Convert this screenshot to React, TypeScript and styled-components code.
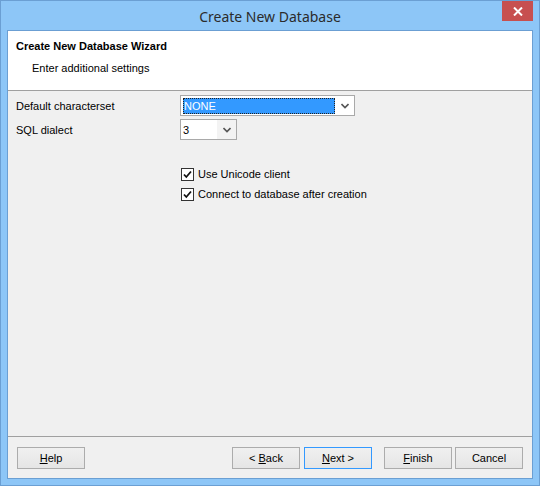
import React from 'react'
import styled, { createGlobalStyle, css } from 'styled-components'

const GlobalStyle = createGlobalStyle`
  html, body {
    margin: 0;
    padding: 0;
    background: #ffffff;
  }
  body {
    font-family: 'Liberation Sans', Arial, sans-serif;
    font-size: 11px;
    color: #000;
  }
`

const Window = styled('div')`
  width: 540px;
  height: 486px;
  box-sizing: border-box;
  border: 1px solid #6b9fd3;
  background: #8dc6f7;
  display: flex;
  flex-direction: column;
  padding: 0 6px 6px 6px;
`

const TitleBar = styled('div')`
  height: 29px;
  flex: none;
  display: flex;
  align-items: center;
  justify-content: center;
  position: relative;
`

const TitleText = styled('span')`
  font-family: 'Noto Sans', 'Open Sans', sans-serif;
  font-size: 14px;
  color: #2b2b2b;
  margin-top: 1px;
`

const CloseButton = styled('div')`
  position: absolute;
  top: 0;
  right: 0;
  width: 31px;
  height: 20px;
  background: #c75050;
  display: flex;
  align-items: center;
  justify-content: center;
`

const Client = styled('div')`
  flex: 1;
  border: 1px solid #6b9fd3;
  background: #f0f0f0;
  display: flex;
  flex-direction: column;
  min-height: 0;
`

const Header = styled('div')`
  height: 60px;
  flex: none;
  background: #ffffff;
  border-bottom: 1px solid #a0a0a0;
  padding: 8px 0 0 8px;
  box-sizing: border-box;
`

const HeaderTitle = styled('div')`
  font-weight: bold;
  line-height: 14px;
`

const HeaderSub = styled('div')`
  margin: 8px 0 0 16px;
  line-height: 14px;
`

const Body = styled('div')`
  flex: 1;
  padding: 4px 0 0 8px;
  display: flex;
  flex-direction: column;
`

const FieldRow = styled('div')`
  display: grid;
  grid-template-columns: 164px auto;
  align-items: center;
  margin-bottom: 3px;
`

const Label = styled('span')`
  line-height: 14px;
`

const Combo = styled('div')<{ $width: number }>`
  width: ${({ $width }) => $width}px;
  height: 21px;
  box-sizing: border-box;
  border: 1px solid #a9a9a9;
  background: #ffffff;
  display: flex;
  align-items: stretch;
`

const ComboValue = styled('div')<{ $selected?: boolean }>`
  flex: 1;
  display: flex;
  align-items: center;
  padding-left: 2px;
  ${({ $selected }) =>
    $selected &&
    css`
      margin: 2px 0 1px 2px;
      padding-left: 1px;
      background: #3399ff;
      color: #ffffff;
      outline: 1px dotted #222;
      outline-offset: -1px;
    `}
`

const ComboArrow = styled('div')<{ $shaded?: boolean }>`
  width: 19px;
  flex: none;
  display: flex;
  align-items: center;
  justify-content: center;
  ${({ $shaded }) =>
    $shaded &&
    css`
      background: #f3f3f3;
    `}
`

const Checks = styled('div')`
  margin: 24px 0 0 165px;
  display: flex;
  flex-direction: column;
  gap: 6px;
`

const CheckRow = styled('label')`
  display: flex;
  align-items: center;
  gap: 4px;
  line-height: 14px;
`

const Box = styled('span')`
  width: 13px;
  height: 13px;
  box-sizing: border-box;
  border: 1px solid #333;
  background: #fff;
  display: flex;
  align-items: center;
  justify-content: center;
`

const Footer = styled('div')`
  height: 42px;
  flex: none;
  border-top: 1px solid #a0a0a0;
  box-sizing: border-box;
  display: flex;
  align-items: flex-start;
  padding: 10px 9px 0 9px;
`

const Button = styled('button')<{ $default?: boolean; $gap?: number }>`
  width: 68px;
  height: 22px;
  box-sizing: border-box;
  margin-left: ${({ $gap }) => $gap ?? 0}px;
  border: 1px solid ${({ $default }) => ($default ? '#3399ff' : '#acacac')};
  background: linear-gradient(#f0f0f0, #e5e5e5);
  font-family: 'Liberation Sans', Arial, sans-serif;
  font-size: 11px;
  color: #000;
  padding: 0;
  u {
    text-decoration: underline;
  }
`

const Spacer = styled('div')`
  flex: 1;
`

const Chevron = () => (
  <svg width="8" height="6" viewBox="0 0 8 6">
    <path d="M0.5 1 L4 4.5 L7.5 1" fill="none" stroke="#555" strokeWidth="1.6" />
  </svg>
)

const Check = () => (
  <svg width="11" height="11" viewBox="0 0 11 11">
    <path d="M2 5.5 L4.3 8 L9 2.5" fill="none" stroke="#111" strokeWidth="1.8" />
  </svg>
)

export default function App() {
  return (
    <>
      <GlobalStyle />
      <Window>
        <TitleBar>
          <TitleText>Create New Database</TitleText>
          <CloseButton>
            <svg width="10" height="9" viewBox="0 0 10 9">
              <path d="M1 0.5 L9 8.5 M9 0.5 L1 8.5" stroke="#fff" strokeWidth="2" />
            </svg>
          </CloseButton>
        </TitleBar>
        <Client>
          <Header>
            <HeaderTitle>Create New Database Wizard</HeaderTitle>
            <HeaderSub>Enter additional settings</HeaderSub>
          </Header>
          <Body>
            <FieldRow>
              <Label>Default characterset</Label>
              <Combo $width={175}>
                <ComboValue $selected>NONE</ComboValue>
                <ComboArrow>
                  <Chevron />
                </ComboArrow>
              </Combo>
            </FieldRow>
            <FieldRow>
              <Label>SQL dialect</Label>
              <Combo $width={57}>
                <ComboValue>3</ComboValue>
                <ComboArrow $shaded>
                  <Chevron />
                </ComboArrow>
              </Combo>
            </FieldRow>
            <Checks>
              <CheckRow>
                <Box>
                  <Check />
                </Box>
                Use Unicode client
              </CheckRow>
              <CheckRow>
                <Box>
                  <Check />
                </Box>
                Connect to database after creation
              </CheckRow>
            </Checks>
          </Body>
          <Footer>
            <Button>
              <u>H</u>elp
            </Button>
            <Spacer />
            <Button>
              &lt; <u>B</u>ack
            </Button>
            <Button $default $gap={4}>
              <u>N</u>ext &gt;
            </Button>
            <Button $gap={12}>
              <u>F</u>inish
            </Button>
            <Button $gap={3}>Cancel</Button>
          </Footer>
        </Client>
      </Window>
    </>
  )
}
